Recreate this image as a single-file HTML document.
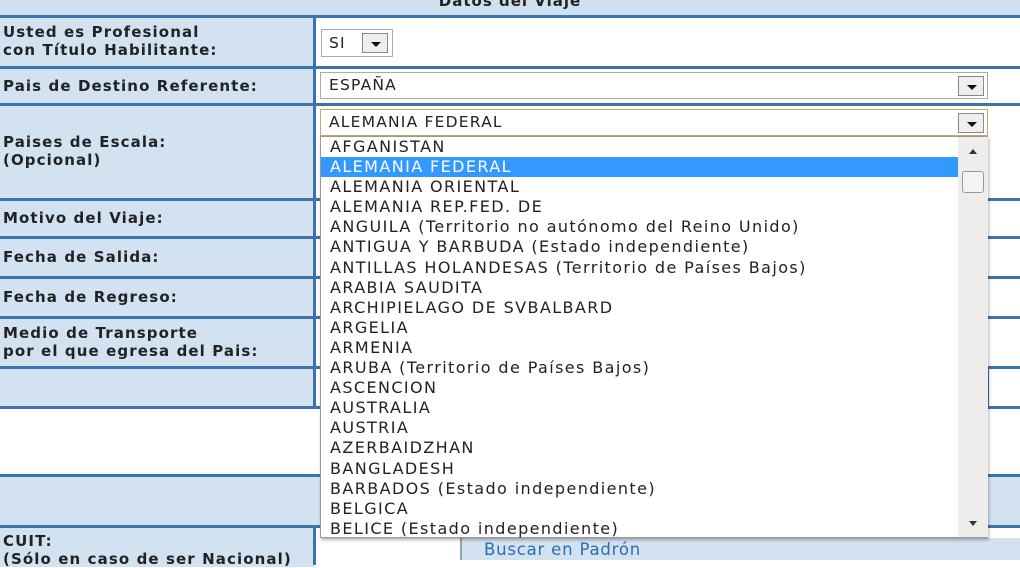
<!DOCTYPE html>
<html><head><meta charset="utf-8"><style>
*{margin:0;padding:0;box-sizing:border-box}
body{width:1020px;height:560px;overflow:hidden;background:#fff;position:relative;font-family:"DejaVu Sans","Liberation Sans",sans-serif;color:#222}
.a{position:absolute}
.hl{position:absolute;left:0;width:1020px;height:3px;background:#3d72ad}
.lb{position:absolute;left:0;width:314px;background:#d3e2f1}
.t{position:absolute;left:3px;font-weight:bold;font-size:15px;letter-spacing:1.1px;line-height:18px;color:#222}
.vl{position:absolute;left:313px;width:3px;background:#3d72ad}
.sel{position:absolute;background:#fff;border:1px solid #aaa;font-size:15.5px;letter-spacing:1.2px;line-height:24px;padding-left:8px}
.btn{position:absolute;width:26px;height:20px;border:1px solid #888;background:#eee;top:3px}
.btn:after{content:"";position:absolute;left:8px;top:8px;border-left:5px solid transparent;border-right:5px solid transparent;border-top:5px solid #111}
.list{position:absolute;left:320px;top:136px;width:668px;height:402px;background:#fff;border:1px solid #999;box-shadow:1px 2px 3px rgba(0,0,0,.3);font-size:16px;letter-spacing:1.4px;line-height:20.1px;color:#222}
.list div{padding-left:9px;white-space:nowrap;height:20.1px}
.list .s{background:#3399ff;color:#fff;width:637px}
</style></head><body>
<div class="a" style="left:0;top:0;width:1020px;height:15px;background:#cfe0f0"></div>
<div class="a" style="left:0;top:-8px;width:1020px;text-align:center;font-weight:bold;font-size:15px;letter-spacing:1px;color:#222">Datos del Viaje</div>
<div class="lb" style="top:15px;height:393px"></div>
<div class="a" style="left:0;top:475px;width:1020px;height:52px;background:#d3e2f1"></div>
<div class="lb" style="top:527px;height:40px"></div>
<div class="a" style="left:462px;top:538px;width:560px;height:22px;background:#d3e2f1"></div>
<div class="a" style="left:460px;top:538px;width:2px;height:22px;background:#8aa"></div>
<div class="hl" style="top:15px"></div><div class="hl" style="top:66px"></div><div class="hl" style="top:103px"></div><div class="hl" style="top:198px"></div><div class="hl" style="top:236px"></div><div class="hl" style="top:276px"></div><div class="hl" style="top:316px"></div><div class="hl" style="top:366px"></div><div class="hl" style="top:406px"></div><div class="hl" style="top:474px"></div><div class="hl" style="top:525px"></div>
<div class="vl" style="top:15px;height:393px"></div>
<div class="vl" style="top:525px;height:40px"></div>
<div class="a" style="left:987px;top:367px;width:2px;height:40px;background:#3d72ad"></div>
<div class="t" style="top:23px">Usted es Profesional<br>con Título Habilitante:</div>
<div class="t" style="top:77px">Pais de Destino Referente:</div>
<div class="t" style="top:133px">Paises de Escala:<br>(Opcional)</div>
<div class="t" style="top:209px">Motivo del Viaje:</div>
<div class="t" style="top:248px">Fecha de Salida:</div>
<div class="t" style="top:288px">Fecha de Regreso:</div>
<div class="t" style="top:324px">Medio de Transporte<br>por el que egresa del Pais:</div>
<div class="t" style="top:532px">CUIT:<br>(Sólo en caso de ser Nacional)</div>
<div class="sel" style="left:321px;top:29px;width:72px;height:28px;padding-left:7px;line-height:27px">SI<div class="btn" style="left:40px"></div></div>
<div class="sel" style="left:320px;top:72px;width:668px;height:27px">ESPAÑA<div class="btn" style="left:637px;top:3px"></div></div>
<div class="sel" style="left:320px;top:109px;width:668px;height:27px;border-color:#c9a86a">ALEMANIA FEDERAL<div class="btn" style="left:637px;top:3px"></div></div>
<div class="list">
<div>AFGANISTAN</div><div class="s">ALEMANIA FEDERAL</div><div>ALEMANIA ORIENTAL</div><div>ALEMANIA REP.FED. DE</div><div>ANGUILA (Territorio no autónomo del Reino Unido)</div><div>ANTIGUA Y BARBUDA (Estado independiente)</div><div>ANTILLAS HOLANDESAS (Territorio de Países Bajos)</div><div>ARABIA SAUDITA</div><div>ARCHIPIELAGO DE SVBALBARD</div><div>ARGELIA</div><div>ARMENIA</div><div>ARUBA (Territorio de Países Bajos)</div><div>ASCENCION</div><div>AUSTRALIA</div><div>AUSTRIA</div><div>AZERBAIDZHAN</div><div>BANGLADESH</div><div>BARBADOS (Estado independiente)</div><div>BELGICA</div><div>BELICE (Estado independiente)</div>
<div class="a" style="left:637px;top:0;width:30px;height:400px;background:#eeedeb"></div>
<div class="a" style="left:648px;top:12px;border-left:4px solid transparent;border-right:4px solid transparent;border-bottom:5px solid #333;height:0;padding:0"></div>
<div class="a" style="left:641px;top:34px;width:22px;height:22px;border:1px solid #999;border-radius:3px;background:#f4f4f4;padding:0"></div>
<div class="a" style="left:648px;top:384px;border-left:4px solid transparent;border-right:4px solid transparent;border-top:5px solid #333;height:0;padding:0"></div>
</div>
<div class="a" style="left:484px;top:540px;font-size:16.5px;letter-spacing:0.8px;color:#2a6db5;line-height:20px">Buscar en Padrón</div>
</body></html>
